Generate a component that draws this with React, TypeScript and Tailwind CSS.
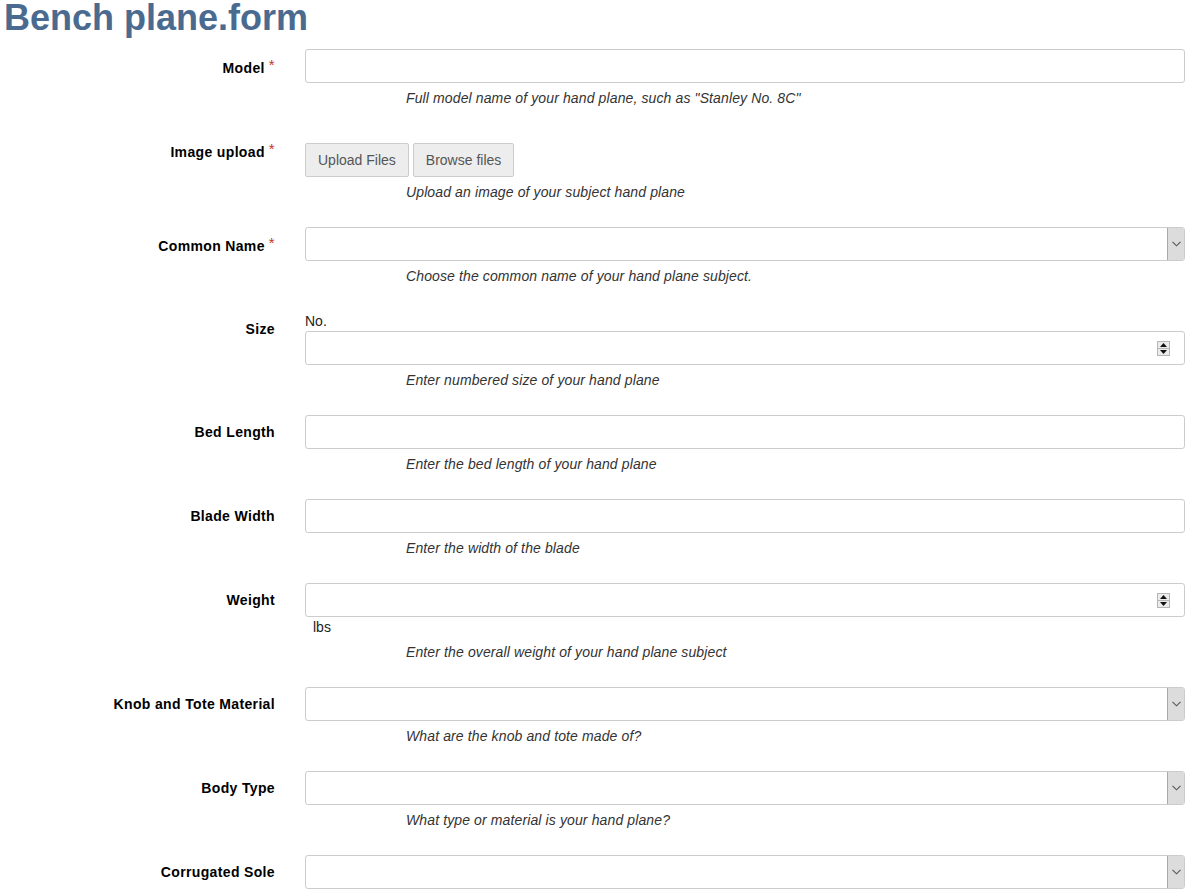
import React from "react";

const Label = ({ text, req, pt }: { text: string; req?: boolean; pt: string }) => (
  <div className={`w-[275px] shrink-0 text-right font-bold text-black tracking-[0.35px] leading-[20px] ${pt}`}>
    {text}
    {req && <span className="text-[#c9302c] font-normal ml-[4px] align-[3px] text-[15px] leading-[0]">*</span>}
  </div>
);

const Help = ({ text }: { text: string }) => (
  <div className="mt-[5px] ml-[101px] leading-[20px] italic text-[#333] tracking-[0.12px]">{text}</div>
);

const TextBox = () => <div className="h-[34px] border border-[#ccc] rounded-[3px] bg-white" />;

const Spinner = () => (
  <div className="h-[34px] border border-[#ccc] rounded-[3px] bg-white flex items-center justify-end pr-[14px]">
    <div className="w-[13px] h-[15px] flex flex-col border border-[#b5b5b5] bg-[#ececec]">
      <div className="flex-1 flex items-center justify-center border-b border-[#b5b5b5]">
        <svg width="7" height="4" viewBox="0 0 7 4"><path d="M3.5 0 L7 4 L0 4 Z" fill="#111" /></svg>
      </div>
      <div className="flex-1 flex items-center justify-center">
        <svg width="7" height="4" viewBox="0 0 7 4"><path d="M0 0 L7 0 L3.5 4 Z" fill="#111" /></svg>
      </div>
    </div>
  </div>
);

const Select = () => (
  <div className="h-[34px] border border-[#ccc] rounded-[3px] bg-white flex justify-end">
    <div className="w-[17px] h-full bg-[#dcdcdc] border-l border-[#a8a8a8] flex items-center justify-center">
      <svg width="9" height="6" viewBox="0 0 9 6"><path d="M0.5 0.8 L4.5 4.8 L8.5 0.8" fill="none" stroke="#555" strokeWidth="1.1" /></svg>
    </div>
  </div>
);

const Row = ({ label, req, pt, children }: { label: string; req?: boolean; pt: string; children: React.ReactNode }) => (
  <div className="flex mb-[25px]">
    <Label text={label} req={req} pt={pt} />
    <div className="ml-[30px] w-[880px]">{children}</div>
  </div>
);

export default function App() {
  return (
    <div className="w-[1190px] h-[892px] overflow-hidden bg-white text-[14px] text-[#333] font-['Liberation_Sans',Arial,sans-serif]">
      <h1 className="text-[36px] leading-[36px] font-bold text-[#4a6b8f] pl-[4px]">Bench plane.form</h1>
      <div className="mt-[13px]">
        <Row label="Model" req pt="pt-[9px]">
          <TextBox />
          <Help text={'Full model name of your hand plane, such as "Stanley No. 8C"'} />
        </Row>
        <Row label="Image upload" req pt="pt-[9px]">
          <div className="mt-[10px] flex gap-[4px]">
            <div className="h-[34px] px-[12px] border border-[#ccc] rounded-[2px] bg-[#ededed] text-[#555] leading-[32px]">Upload Files</div>
            <div className="h-[34px] px-[12px] border border-[#ccc] rounded-[2px] bg-[#ededed] text-[#555] leading-[32px]">Browse files</div>
          </div>
          <Help text="Upload an image of your subject hand plane" />
        </Row>
        <Row label="Common Name" req pt="pt-[9px]">
          <Select />
          <Help text="Choose the common name of your hand plane subject." />
        </Row>
        <Row label="Size" pt="pt-[8px]">
          <div className="leading-[20px] text-[#222]">No.</div>
          <Spinner />
          <Help text="Enter numbered size of your hand plane" />
        </Row>
        <Row label="Bed Length" pt="pt-[7px]">
          <TextBox />
          <Help text="Enter the bed length of your hand plane" />
        </Row>
        <Row label="Blade Width" pt="pt-[7px]">
          <TextBox />
          <Help text="Enter the width of the blade" />
        </Row>
        <Row label="Weight" pt="pt-[7px]">
          <Spinner />
          <div className="leading-[20px] pl-[8px] text-[#222]">lbs</div>
          <Help text="Enter the overall weight of your hand plane subject" />
        </Row>
        <Row label="Knob and Tote Material" pt="pt-[7px]">
          <Select />
          <Help text="What are the knob and tote made of?" />
        </Row>
        <Row label="Body Type" pt="pt-[7px]">
          <Select />
          <Help text="What type or material is your hand plane?" />
        </Row>
        <Row label="Corrugated Sole" pt="pt-[7px]">
          <Select />
        </Row>
      </div>
    </div>
  );
}
